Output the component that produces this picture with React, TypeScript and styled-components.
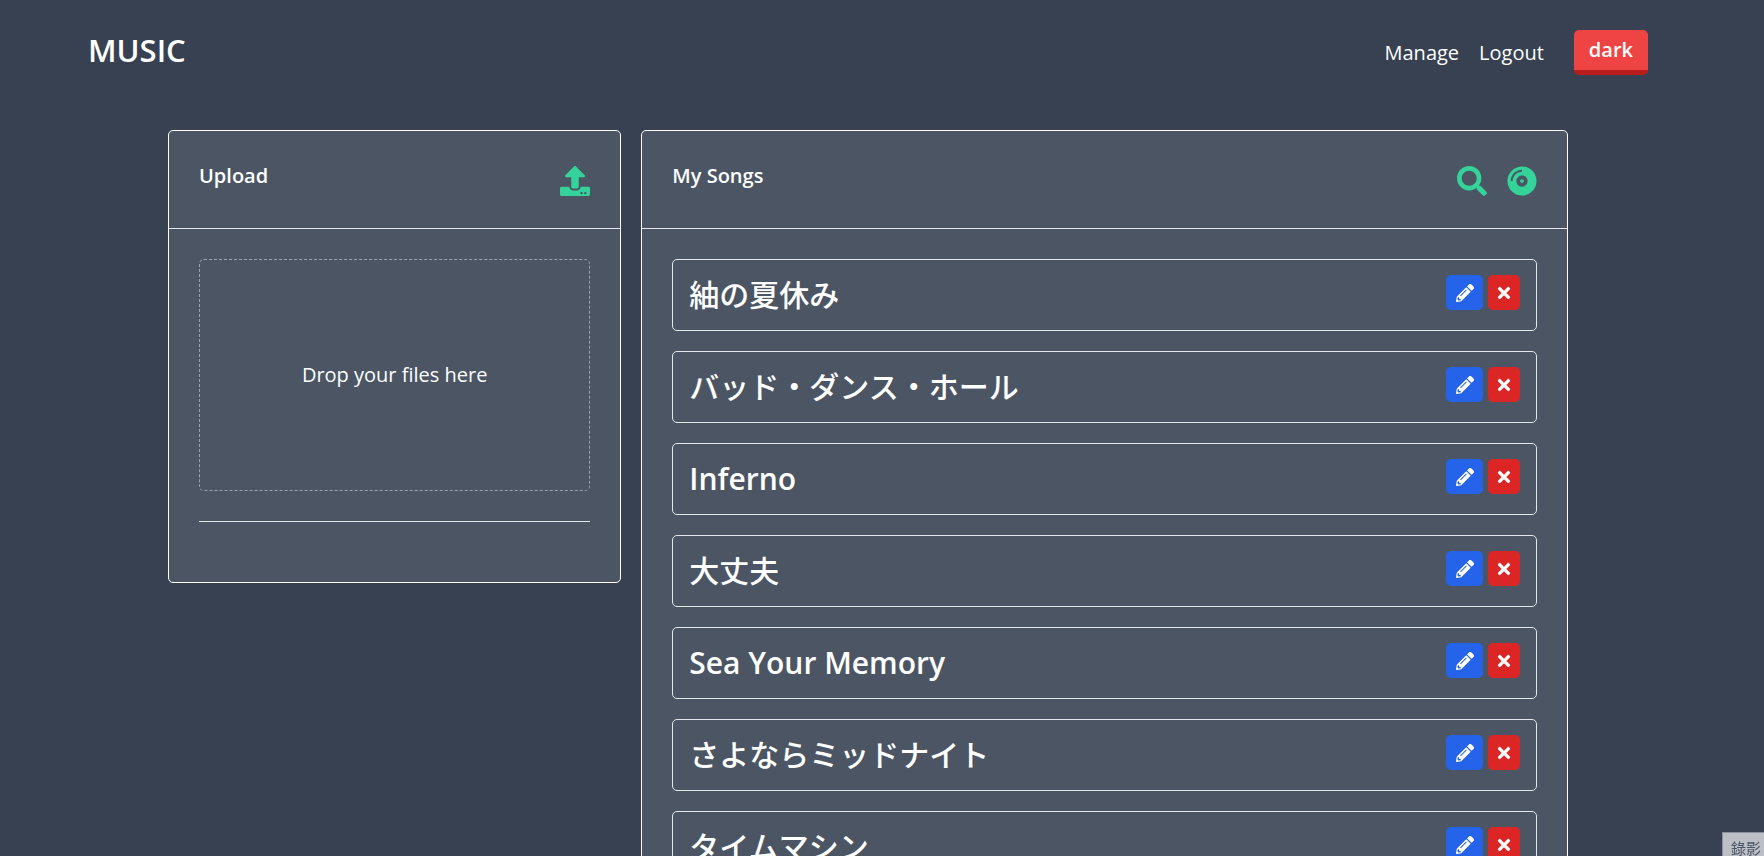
import React from "react";
import styled, { createGlobalStyle } from "styled-components";
import { FaUpload, FaSearch, FaCompactDisc, FaPencilAlt, FaTimes } from "react-icons/fa";

const GlobalStyle = createGlobalStyle`
  *, *::before, *::after { box-sizing: border-box; }
  body {
    margin: 0;
    background: #374151;
    color: #fff;
    font-family: "Open Sans", "Noto Sans CJK JP", sans-serif;
    font-size: 20px;
    line-height: 30px;
  }
  h1, h2, h3, ul { margin: 0; padding: 0; }
  button { font: inherit; color: inherit; cursor: pointer; }
`;

const Page = styled.div`
  height: 100vh;
  padding-right: 28px;
  overflow-y: auto;
  scrollbar-width: none;
`;

const Header = styled.header`
  display: flex;
  justify-content: space-between;
  align-items: flex-start;
  max-width: 1600px;
  margin: 0 auto;
  padding: 30px 20px 55px;
`;

const Brand = styled.h1`
  font-size: 31px;
  font-weight: 600;
  line-height: 40px;
`;

const Nav = styled.nav`
  display: flex;
  align-items: flex-start;
  gap: 20px;
`;

const NavLink = styled.a`
  padding-top: 8px;
  color: #fff;
  text-decoration: none;
`;

const ThemeButton = styled.button`
  margin-left: 10px;
  padding: 5px 15px;
  border: 0;
  border-bottom: 5px solid #b91c1c;
  border-radius: 5px;
  background: #ef4444;
  font-weight: 600;
`;

const Main = styled.main`
  display: grid;
  grid-template-columns: repeat(3, minmax(0, 1fr));
  align-items: start;
  gap: 20px;
  max-width: 1400px;
  margin: 0 auto;
`;

const Card = styled.section<{ $span: number }>`
  grid-column: span ${(p) => p.$span};
  border: 1px solid #fff;
  border-radius: 5px;
  background: #4b5563;
`;

const CardHeader = styled.div`
  display: flex;
  justify-content: space-between;
  align-items: flex-start;
  min-height: 98px;
  padding: 30px;
  border-bottom: 1px solid #e5e7eb;
`;

const CardTitle = styled.h2`
  font-size: 20px;
  font-weight: 600;
`;

const CardIcons = styled.div`
  display: flex;
  align-items: flex-end;
  gap: 20px;
  height: 35px;
  color: #34d399;
  font-size: 30px;

  svg { display: block; }
`;

const CardBody = styled.div`
  padding: 30px;
`;

const DropZone = styled.div`
  padding: 100px 20px;
  border: 1px dashed #9ca3af;
  border-radius: 5px;
  text-align: center;
`;

const Divider = styled.hr`
  margin: 30px 0;
  border: 0;
  border-top: 1px solid #e5e7eb;
`;

const SongList = styled.ul`
  display: flex;
  flex-direction: column;
  gap: 20px;
  list-style: none;
`;

const SongRow = styled.li`
  display: flex;
  justify-content: space-between;
  align-items: flex-start;
  padding: 15px 16px;
  border: 1px solid #e5e7eb;
  border-radius: 5px;
`;

const SongTitle = styled.h3`
  font-size: 30px;
  font-weight: 600;
  line-height: 40px;

  &:lang(ja) { font-weight: 500; }
`;

const Actions = styled.div`
  display: flex;
  gap: 5px;
`;

const ActionButton = styled.button<{ $danger?: boolean }>`
  display: flex;
  align-items: center;
  justify-content: center;
  width: ${(p) => (p.$danger ? 32 : 37)}px;
  height: 35px;
  padding: 0;
  border: 0;
  border-radius: 5px;
  background: ${(p) => (p.$danger ? "#dc2626" : "#2563eb")};
  font-size: 18px;
`;

const RecordTip = styled.div`
  position: fixed;
  right: 0;
  bottom: 0;
  height: 24px;
  padding: 3px 3px 0 8px;
  border: solid #8b93a1;
  border-width: 1px 0 0 1px;
  background: #bcc0c6;
  color: #4b5563;
  font-family: "Noto Sans CJK TC", sans-serif;
  font-size: 15px;
  line-height: 24px;
`;

const songs = [
  { title: "紬の夏休み", lang: "ja" },
  { title: "バッド・ダンス・ホール", lang: "ja" },
  { title: "Inferno", lang: "en" },
  { title: "大丈夫", lang: "ja" },
  { title: "Sea Your Memory", lang: "en" },
  { title: "さよならミッドナイト", lang: "ja" },
  { title: "タイムマシン", lang: "ja" },
];

export default function App() {
  return (
    <>
      <GlobalStyle />
      <Page>
        <Header>
          <Brand>MUSIC</Brand>
          <Nav>
            <NavLink href="#manage">Manage</NavLink>
            <NavLink href="#logout">Logout</NavLink>
            <ThemeButton type="button">dark</ThemeButton>
          </Nav>
        </Header>
        <Main>
          <Card $span={1}>
            <CardHeader>
              <CardTitle>Upload</CardTitle>
              <CardIcons>
                <FaUpload />
              </CardIcons>
            </CardHeader>
            <CardBody>
              <DropZone>Drop your files here</DropZone>
              <Divider />
            </CardBody>
          </Card>
          <Card $span={2}>
            <CardHeader>
              <CardTitle>My Songs</CardTitle>
              <CardIcons>
                <FaSearch />
                <FaCompactDisc />
              </CardIcons>
            </CardHeader>
            <CardBody>
              <SongList>
                {songs.map(({ title, lang }) => (
                  <SongRow key={title}>
                    <SongTitle lang={lang}>{title}</SongTitle>
                    <Actions>
                      <ActionButton type="button" aria-label={`Edit ${title}`}>
                        <FaPencilAlt />
                      </ActionButton>
                      <ActionButton type="button" $danger aria-label={`Delete ${title}`}>
                        <FaTimes />
                      </ActionButton>
                    </Actions>
                  </SongRow>
                ))}
              </SongList>
            </CardBody>
          </Card>
        </Main>
        <RecordTip>錄影</RecordTip>
      </Page>
    </>
  );
}
